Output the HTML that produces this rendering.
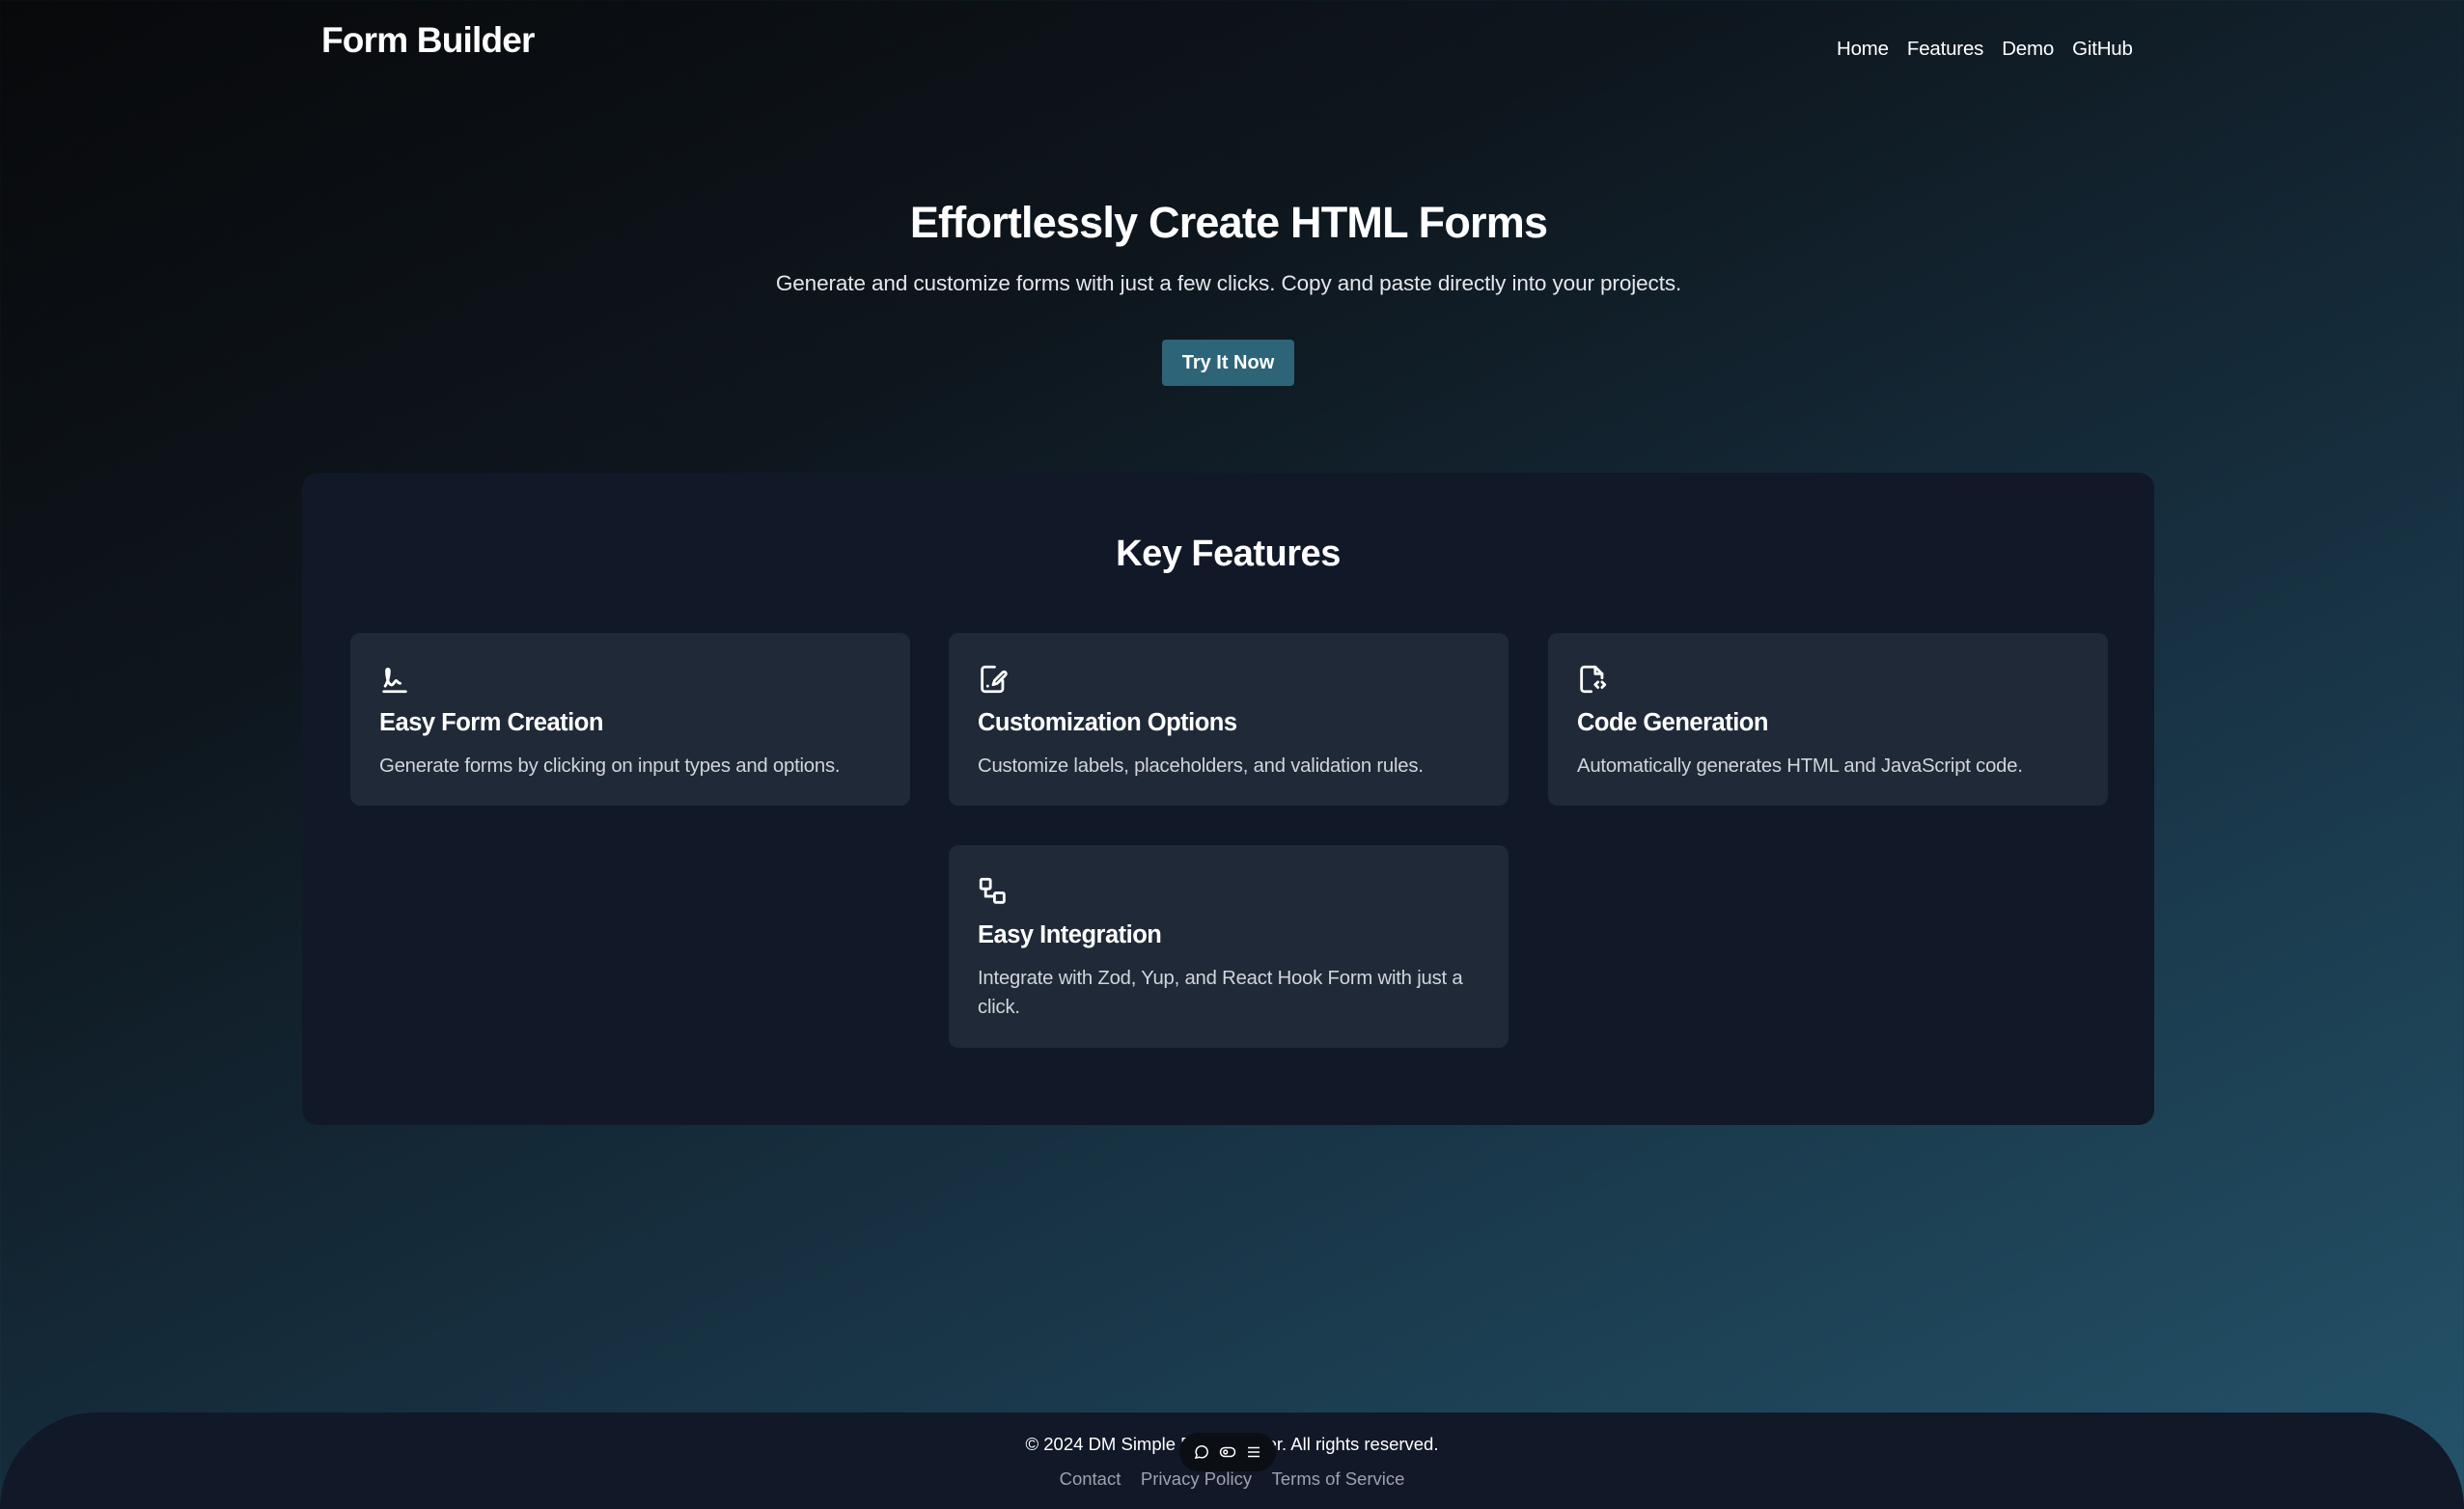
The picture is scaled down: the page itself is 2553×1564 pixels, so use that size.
<!DOCTYPE html>
<html><head><meta charset="utf-8"><style>
*{margin:0;padding:0;box-sizing:border-box}
html,body{width:2553px;height:1564px;overflow:hidden}
body{font-family:"Liberation Sans",sans-serif;color:#fff;position:relative;
background:linear-gradient(155deg,#08090b 0%,#0e161d 30%,#173142 62%,#24536a 100%);}
.logo{position:absolute;left:333px;top:21px;font-size:37px;font-weight:bold;letter-spacing:-0.8px}
.nav{position:absolute;top:39px;left:1903px;font-size:20.5px;display:flex;gap:19px;letter-spacing:-0.2px}
.h1{position:absolute;left:0;width:2546px;text-align:center;top:205px;font-size:45px;font-weight:bold;letter-spacing:-0.8px}
.sub{position:absolute;left:0;width:2546px;text-align:center;top:281px;font-size:22.5px;color:#e5e7eb;letter-spacing:-0.1px}
.btn{position:absolute;left:1204px;top:352px;width:137px;height:48px;background:#2d6478;border-radius:4px;font-size:20px;font-weight:bold;display:flex;align-items:center;justify-content:center}
.panel{position:absolute;left:313px;top:490px;width:1919px;height:676px;background:#111827;border-radius:16px}
.kf{position:absolute;left:0;width:100%;text-align:center;top:63px;font-size:38px;font-weight:bold;letter-spacing:-0.5px}
.card{position:absolute;width:580px;background:#1f2937;border-radius:10px;padding:0 30px}
.card svg{position:absolute;left:29px;top:31px}
.card h3{position:absolute;left:30px;top:79px;font-size:25.5px;font-weight:bold;letter-spacing:-0.5px}
.card p{position:absolute;left:30px;top:123px;right:28px;font-size:20.3px;line-height:30px;color:#d1d5db;letter-spacing:-0.2px}
.footer{position:absolute;left:0;top:1464px;width:2553px;height:140px;background:#111827;border-radius:100px 100px 0 0}
.ft{position:absolute;width:100%;text-align:center;font-size:18.5px}
.pill{position:absolute;left:1222px;top:1485px;width:100px;height:40px;border-radius:20px;background:#0b0e14;display:flex;align-items:center;justify-content:space-around;padding:0 10px}
</style></head><body>
<div class="logo">Form Builder</div>
<div class="nav"><span>Home</span><span>Features</span><span>Demo</span><span>GitHub</span></div>
<div class="h1">Effortlessly Create HTML Forms</div>
<div class="sub">Generate and customize forms with just a few clicks. Copy and paste directly into your projects.</div>
<div class="btn">Try It Now</div>
<div class="panel">
<div class="kf">Key Features</div>
<div class="card" style="left:50px;top:166px;height:179px">
<svg width="34" height="34" viewBox="0 0 24 24" fill="none" stroke="#fff" stroke-width="2" stroke-linecap="round"><path d="M4 21h16"/><path d="M5 17c2-3 3-8 3-11 0-2-2-2-2 0 0 4 1 9 3 10 2 1 3-3 4-3s1 2 3 2"/></svg>
<h3>Easy Form Creation</h3><p>Generate forms by clicking on input types and options.</p></div>
<div class="card" style="left:670px;top:166px;height:179px">
<svg width="34" height="34" viewBox="0 0 24 24" fill="none" stroke="#fff" stroke-width="2" stroke-linecap="round" stroke-linejoin="round"><path d="M13 3H6a2 2 0 0 0-2 2v14a2 2 0 0 0 2 2h11a2 2 0 0 0 2-2v-6"/><path d="M19 7l-6 6-1 3 3-1 6-6a1.4 1.4 0 0 0-2-2z"/><path d="M8 17h.01"/></svg>
<h3>Customization Options</h3><p>Customize labels, placeholders, and validation rules.</p></div>
<div class="card" style="left:1291px;top:166px;height:179px">
<svg width="34" height="34" viewBox="0 0 24 24" fill="none" stroke="#fff" stroke-width="2" stroke-linecap="round" stroke-linejoin="round"><path d="M11 21H6a2 2 0 0 1-2-2V5a2 2 0 0 1 2-2h8l5 5v3"/><path d="M14 3v5h5"/><path d="M16 14l-2 2 2 2M19 14l2 2-2 2"/></svg>
<h3>Code Generation</h3><p>Automatically generates HTML and JavaScript code.</p></div>
<div class="card" style="left:670px;top:386px;height:210px">
<svg width="34" height="34" viewBox="0 0 24 24" fill="none" stroke="#fff" stroke-width="2" stroke-linejoin="round"><rect x="3" y="3" width="7" height="7" rx="1"/><rect x="13" y="13" width="7" height="7" rx="1"/><path d="M6.5 10v5.5H13"/></svg>
<h3>Easy Integration</h3><p>Integrate with Zod, Yup, and React Hook Form with just a click.</p></div>
</div>
<div class="footer"></div>
<div class="ft" style="top:1486px">© 2024 DM Simple Form Builder. All rights reserved.</div>
<div class="ft" style="top:1522px;color:#9ca3af">Contact&nbsp;&nbsp;&nbsp;&nbsp;Privacy Policy&nbsp;&nbsp;&nbsp;&nbsp;Terms of Service</div>
<div class="pill">
<svg width="18" height="18" viewBox="0 0 24 24" fill="none" stroke="#fff" stroke-width="2"><path d="M4 20l1.5-4A8 8 0 1 1 9 19z"/></svg>
<svg width="18" height="18" viewBox="0 0 24 24" fill="none" stroke="#fff" stroke-width="2"><rect x="2" y="6" width="20" height="12" rx="6"/><circle cx="9" cy="12" r="2.5"/></svg>
<svg width="18" height="18" viewBox="0 0 24 24" fill="none" stroke="#fff" stroke-width="2"><path d="M4 6h16M4 12h16M4 18h16"/></svg>
</div>
</body></html>
